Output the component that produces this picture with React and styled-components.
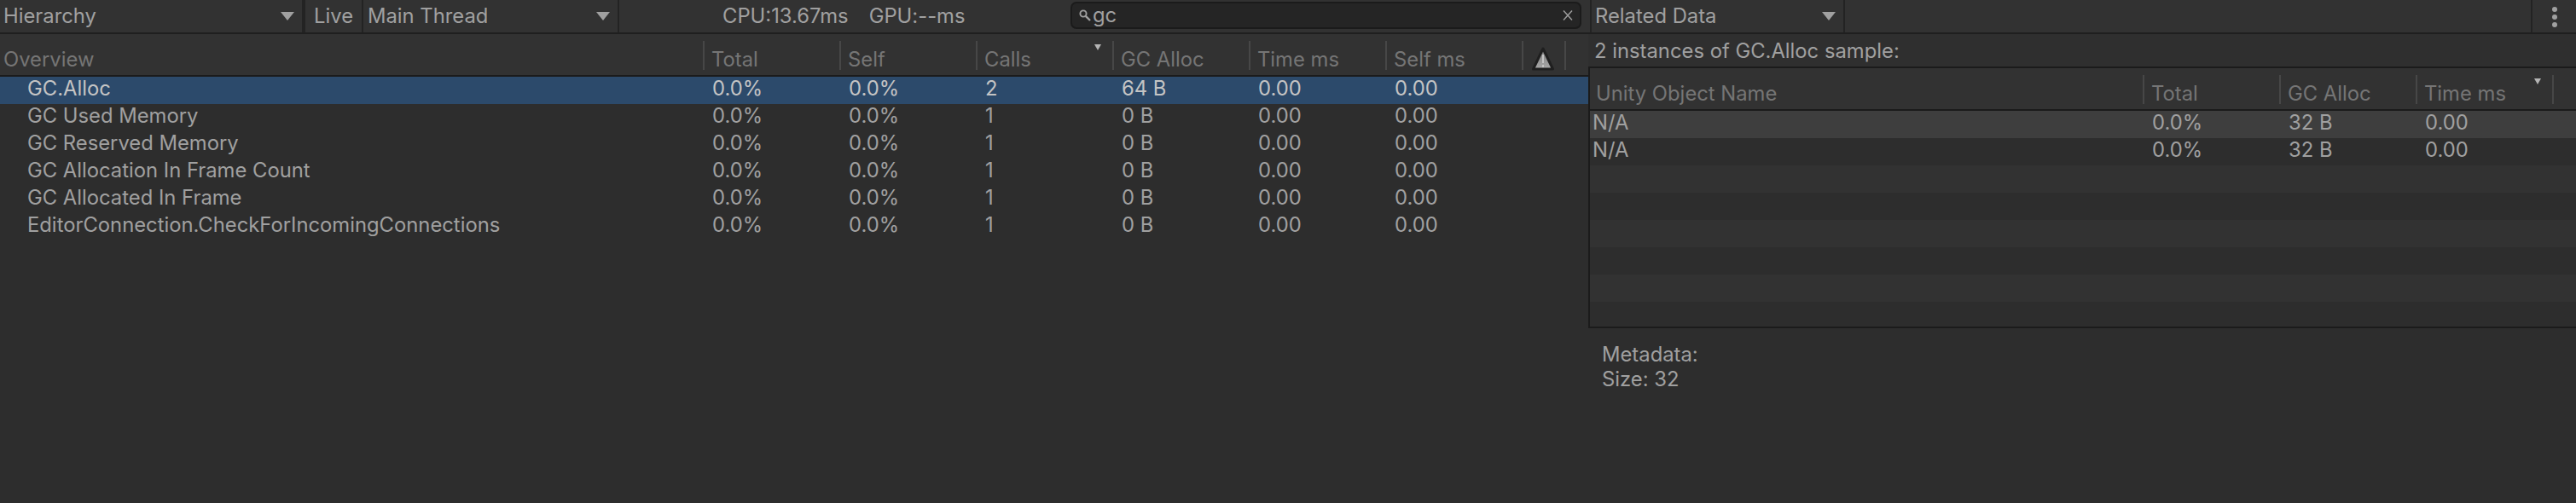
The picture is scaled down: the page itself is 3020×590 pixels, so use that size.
import React from "react";
import styled, { createGlobalStyle } from "styled-components";

const overviewRows = [
  { name: "GC.Alloc", calls: "2", alloc: "64 B", selected: true },
  { name: "GC Used Memory", calls: "1", alloc: "0 B" },
  { name: "GC Reserved Memory", calls: "1", alloc: "0 B" },
  { name: "GC Allocation In Frame Count", calls: "1", alloc: "0 B" },
  { name: "GC Allocated In Frame", calls: "1", alloc: "0 B" },
  { name: "EditorConnection.CheckForIncomingConnections", calls: "1", alloc: "0 B" },
];

const App = () => (
  <Page>
    <GlobalStyle />
    <Toolbar>
      <Dropdown $width={358} $gap>
        Hierarchy
        <Caret />
      </Dropdown>
      <LiveButton>Live</LiveButton>
      <Dropdown $width={300}>
        <DropdownLabel>Main Thread</DropdownLabel>
        <Caret />
      </Dropdown>
      <Stats>
        <span>CPU:13.67ms</span>
        <span>GPU:--ms</span>
      </Stats>
      <SearchBox>
        <svg width="14" height="14" viewBox="0 0 14 14" fill="none" stroke="#a0a0a0">
          <circle cx="5" cy="5" r="3.6" strokeWidth="1.9" />
          <path d="M7.8 7.8 L13 13" strokeWidth="2.4" />
        </svg>
        <SearchText>gc</SearchText>
        <svg width="12" height="14" viewBox="0 0 12 14" fill="none" stroke="#a0a0a0" strokeWidth="1.4">
          <path d="M1 1.5 L11 12.5 M11 1.5 L1 12.5" />
        </svg>
      </SearchBox>
      <Dropdown $width={299} $start>
        Related Data
        <Caret />
      </Dropdown>
      <MenuButton>
        <i />
        <i />
        <i />
      </MenuButton>
    </Toolbar>
    <Panels>
      <LeftPanel>
        <OverviewHeader>
          <HeadCell $first>Overview</HeadCell>
          <HeadCell>Total</HeadCell>
          <HeadCell>Self</HeadCell>
          <HeadCell>
            Calls
            <SortMark />
          </HeadCell>
          <HeadCell>GC Alloc</HeadCell>
          <HeadCell>Time ms</HeadCell>
          <HeadCell>Self ms</HeadCell>
          <HeadCell>
            <WarningIcon />
          </HeadCell>
          <HeadCell />
        </OverviewHeader>
        {overviewRows.map((row) => (
          <OverviewRow key={row.name} $selected={row.selected}>
            <NameCell>{row.name}</NameCell>
            <ValueCell>0.0%</ValueCell>
            <ValueCell>0.0%</ValueCell>
            <ValueCell>{row.calls}</ValueCell>
            <ValueCell>{row.alloc}</ValueCell>
            <ValueCell>0.00</ValueCell>
            <ValueCell>0.00</ValueCell>
          </OverviewRow>
        ))}
      </LeftPanel>
      <RightPanel>
        <InstanceLabel>2 instances of GC.Alloc sample:</InstanceLabel>
        <ObjectTable>
          <ObjectHeader>
            <HeadCell $first>Unity Object Name</HeadCell>
            <HeadCell>Total</HeadCell>
            <HeadCell>GC Alloc</HeadCell>
            <HeadCell>
              Time ms
              <SortMark />
            </HeadCell>
            <HeadCell />
          </ObjectHeader>
          {[0, 1, 2, 3, 4, 5, 6, 7].map((i) => (
            <ObjectRow key={i} $selected={i === 0} $odd={i % 2 === 0}>
              {i < 2 && (
                <>
                  <ObjectName>N/A</ObjectName>
                  <ValueCell>0.0%</ValueCell>
                  <ValueCell>32 B</ValueCell>
                  <ValueCell>0.00</ValueCell>
                </>
              )}
            </ObjectRow>
          ))}
        </ObjectTable>
        <Metadata>
          <div>Metadata:</div>
          <div>Size: 32</div>
        </Metadata>
      </RightPanel>
    </Panels>
  </Page>
);

const WarningIcon = () => (
  <WarningSvg width="30" height="30" viewBox="0 0 30 30">
    <defs>
      <linearGradient id="warnFill" x1="0" y1="0" x2="0" y2="1">
        <stop offset="0" stopColor="#7c7c7c" />
        <stop offset="1" stopColor="#a8a8a8" />
      </linearGradient>
    </defs>
    <path d="M15 3 L26.5 27 L3.5 27 Z" fill="url(#warnFill)" stroke="#1f1f1f" strokeWidth="3" strokeLinejoin="round" />
    <path d="M15 10 V20 M15 22 V25" stroke="#c4c4c4" strokeWidth="2" />
  </WarningSvg>
);

export default App;

const GlobalStyle = createGlobalStyle`
  html, body {
    margin: 0;
    padding: 0;
    background: #2d2d2d;
  }
`;

const Page = styled.div`
  width: 3020px;
  height: 590px;
  overflow: hidden;
  display: flex;
  flex-direction: column;
  background: #2d2d2d;
  color: #a0a0a0;
  font-family: Inter, "Liberation Sans", sans-serif;
  font-size: 23.8px;
`;

const Toolbar = styled.div`
  height: 38px;
  flex: none;
  display: flex;
  align-items: stretch;
  background: #323232;
  border-bottom: 2px solid #1f1f1f;
`;

const Dropdown = styled.div`
  position: relative;
  box-sizing: border-box;
  width: ${(p) => p.$width}px;
  padding-left: 4px;
  line-height: 37px;
  border-right: ${(p) => (p.$gap ? "4px" : "2px")} solid #232323;
  ${(p) => p.$start && "border-left: 2px solid #232323;"}
`;

const DropdownLabel = styled.span`
  margin-left: 1px;
`;

const Caret = styled.span`
  position: absolute;
  right: 9px;
  top: 14px;
  width: 0;
  height: 0;
  border-left: 8px solid transparent;
  border-right: 8px solid transparent;
  border-top: 10px solid #a0a0a0;
`;

const LiveButton = styled.div`
  box-sizing: border-box;
  width: 68px;
  padding-left: 10px;
  line-height: 37px;
  border-right: 2px solid #232323;
`;

const Stats = styled.div`
  box-sizing: border-box;
  width: 529px;
  padding-left: 121px;
  display: flex;
  gap: 24px;
  line-height: 38px;
`;

const SearchBox = styled.div`
  box-sizing: border-box;
  width: 599px;
  height: 32px;
  margin: 2px 10px 0 0;
  padding: 0 8px;
  display: flex;
  align-items: center;
  gap: 2px;
  background: #252525;
  border: 2px solid #1b1b1b;
  border-radius: 7px;
`;

const SearchText = styled.span`
  flex: 1;
  line-height: 28px;
`;

const MenuButton = styled.div`
  margin-left: auto;
  box-sizing: border-box;
  width: 53px;
  padding-top: 8px;
  display: flex;
  flex-direction: column;
  align-items: center;
  gap: 3px;
  border-left: 2px solid #232323;

  i {
    width: 6px;
    height: 6px;
    border-radius: 50%;
    background: #a0a0a0;
  }
`;

const Panels = styled.div`
  flex: 1;
  display: flex;
  min-height: 0;
`;

const LeftPanel = styled.div`
  width: 1862px;
  flex: none;
`;

const leftColumns = "824px repeat(6, 160px) 50px 1fr";
const rightColumns = "648px 160px 160px 160px 1fr";

const OverviewHeader = styled.div`
  height: 48px;
  display: grid;
  grid-template-columns: ${leftColumns};
  align-items: end;
  background: #323232;
  border-bottom: 2px solid #1b1b1b;
`;

const HeadCell = styled.div`
  position: relative;
  box-sizing: border-box;
  height: 34px;
  margin-bottom: 6px;
  padding-left: ${(p) => (p.$first ? 4 : 8)}px;
  border-left: ${(p) => (p.$first ? "none" : "2px solid #474747")};
  color: #757575;
  line-height: 44px;
  white-space: nowrap;
`;

const SortMark = styled.span`
  position: absolute;
  right: 13px;
  top: 4px;
  width: 0;
  height: 0;
  border-left: 4px solid transparent;
  border-right: 4px solid transparent;
  border-top: 7px solid #b4b4b4;
`;

const WarningSvg = styled.svg`
  position: absolute;
  left: 8px;
  top: 6px;
`;

const OverviewRow = styled.div`
  height: 32px;
  display: grid;
  grid-template-columns: ${leftColumns};
  align-items: start;
  line-height: 28px;
  background: ${(p) => (p.$selected ? "#2c4a6b" : "transparent")};
  color: ${(p) => (p.$selected ? "#c4c4c4" : "#a0a0a0")};
`;

const NameCell = styled.div`
  padding-left: 32px;
  white-space: nowrap;
`;

const ValueCell = styled.div`
  padding-left: 11px;
  white-space: nowrap;
`;

const RightPanel = styled.div`
  flex: 1;
  min-width: 0;
`;

const InstanceLabel = styled.div`
  height: 38px;
  padding-left: 7px;
  line-height: 40px;
  background: #2f2f2f;
`;

const ObjectTable = styled.div`
  height: 303px;
  overflow: hidden;
  border-top: 2px solid #1b1b1b;
  border-left: 2px solid #1b1b1b;
  border-bottom: 2px solid #1b1b1b;
`;

const ObjectHeader = styled.div`
  height: 48px;
  display: grid;
  grid-template-columns: ${rightColumns};
  align-items: end;
  background: #323232;
  border-bottom: 2px solid #1b1b1b;

  ${HeadCell}:first-child {
    padding-left: 7px;
  }
`;

const ObjectRow = styled.div`
  height: 32px;
  display: grid;
  grid-template-columns: ${rightColumns};
  align-items: start;
  line-height: 28px;
  background: ${(p) => (p.$selected ? "#3e3e3e" : p.$odd ? "#323232" : "#2d2d2d")};
`;

const ObjectName = styled.div`
  padding-left: 3px;
`;

const Metadata = styled.div`
  padding: 16px 0 0 16px;
  line-height: 29px;
`;
